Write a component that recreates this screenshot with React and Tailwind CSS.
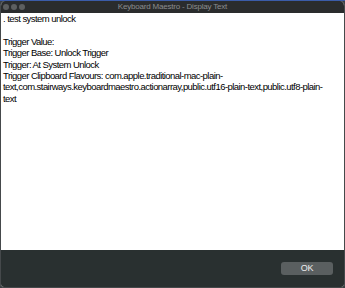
export default function App() {
  return (
    <div className="w-[345px] h-[288px] bg-[#3a3f44] flex flex-col overflow-hidden" style={{ fontFamily: '"Liberation Sans", Arial, sans-serif' }}>
      <div className="h-[1px] bg-[#3b5ca8]" />
      <div className="flex-1 flex flex-col rounded-t-[5px] rounded-b-[4px] overflow-hidden bg-white border-x border-b border-[#45494b]">
        <div className="h-[12px] shrink-0 bg-[#2a2c2d] relative flex items-center justify-center">
          <div className="absolute left-[2px] top-[3px] flex gap-[2px]">
            <div className="w-[6px] h-[6px] rounded-full bg-[#5d5f60]" />
            <div className="w-[6px] h-[6px] rounded-full bg-[#5d5f60]" />
            <div className="w-[6px] h-[6px] rounded-full bg-[#5d5f60]" />
          </div>
          <span className="text-[8px] tracking-[-0.2px] leading-none text-[#8b8c8d]">Keyboard Maestro - Display Text</span>
        </div>
        <div className="flex-1 bg-white px-[2px] text-[9.5px] tracking-[-0.55px] leading-[11.4px] text-black">
          <div>. test system unlock</div>
          <div className="h-[11.4px]" />
          <div>Trigger Value:</div>
          <div>Trigger Base: Unlock Trigger</div>
          <div>Trigger: At System Unlock</div>
          <div className="w-[328px]">
            Trigger Clipboard Flavours: com.apple.traditional-mac-plain-text,com.stairways.keyboardmaestro.actionarray,public.utf16-plain-text,public.utf8-plain-text
          </div>
        </div>
        <div className="h-[37px] shrink-0 bg-[#293030] flex items-start justify-end pt-[12px] pr-[11px]">
          <div className="w-[52px] h-[13px] rounded-[3px] bg-[#5a5f60] flex items-center justify-center text-[9px] tracking-[-0.3px] text-[#ececec] leading-none">OK</div>
        </div>
      </div>
    </div>
  );
}
